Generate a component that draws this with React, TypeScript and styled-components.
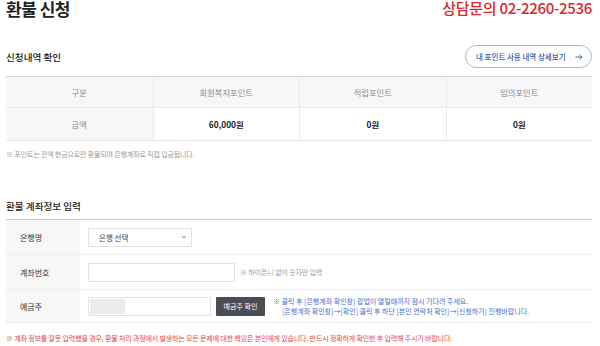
import React from "react";
import styled, { createGlobalStyle } from "styled-components";

const GlobalStyle = createGlobalStyle`
  html, body {
    margin: 0;
    padding: 0;
    background: #fff;
    font-family: "Noto Sans CJK KR", "Noto Sans", sans-serif;
    color: #222;
  }
`;

const Page = styled.div`
  width: 586px;
  margin: 0 8px 0 6px;
`;

const Header = styled.div`
  height: 18px;
  display: flex;
  align-items: flex-start;
  justify-content: space-between;
`;

const PageTitle = styled.h1`
  margin: 0;
  font-size: 17px;
  line-height: 17px;
  font-weight: 700;
  letter-spacing: -0.5px;
`;

const Contact = styled.div`
  font-size: 15px;
  line-height: 15px;
  font-weight: 500;
  color: #d9262b;
  letter-spacing: -0.3px;
`;

const SectionBar = styled.div<{ $top: number }>`
  margin-top: ${(p) => p.$top}px;
  height: 23px;
  display: flex;
  align-items: center;
  justify-content: space-between;
`;

const SectionTitle = styled.h2`
  margin: 0;
  font-size: 9.6px;
  font-weight: 500;
  color: #222;
`;

const PillButton = styled.button`
  width: 127px;
  height: 23px;
  padding: 0 8px 0 10px;
  display: flex;
  align-items: center;
  justify-content: space-between;
  border: 1px solid #a3b9df;
  border-radius: 12px;
  background: #fff;
  color: #2f5fae;
  font-family: inherit;
  font-size: 7.5px;
  font-weight: 500;
`;

const Table = styled.div`
  margin-top: 8px;
  border-top: 1px solid #d5d5d5;
  display: grid;
  grid-template-columns: repeat(4, 1fr);
`;

const Cell = styled.div<{ $head?: boolean; $strong?: boolean; $h: number }>`
  height: ${(p) => p.$h}px;
  display: flex;
  align-items: center;
  justify-content: center;
  background: ${(p) => (p.$head ? "#f7f7f7" : "#fff")};
  border-bottom: 1px solid #eaeaea;
  border-left: 1px solid #eaeaea;
  font-size: 8.3px;
  color: ${(p) => (p.$strong ? "#222" : "#8a8a8a")};
  font-weight: ${(p) => (p.$strong ? 700 : 400)};
  &:nth-child(4n + 1) {
    border-left: none;
  }
`;

const Note = styled.p<{ $color?: string; $top: number }>`
  margin: ${(p) => p.$top}px 0 0;
  font-size: 7px;
  line-height: 12px;
  color: ${(p) => p.$color || "#9a9a9a"};
  letter-spacing: -0.15px;
`;

const Form = styled.div`
  margin-top: 2px;
  border-top: 1px solid #c8c8c8;
`;

const Row = styled.div<{ $h: number }>`
  display: flex;
  height: ${(p) => p.$h}px;
  border-bottom: 1px solid #eeeeee;
`;

const Label = styled.div`
  width: 74px;
  flex-shrink: 0;
  background: #f7f7f7;
  display: flex;
  align-items: center;
  padding-left: 14px;
  box-sizing: border-box;
  font-size: 8px;
  color: #333;
`;

const Field = styled.div`
  flex: 1;
  display: flex;
  align-items: center;
  padding-left: 8px;
  gap: 5px;
`;

const Select = styled.div`
  width: 104px;
  height: 19px;
  box-sizing: border-box;
  border: 1px solid #e3e3e3;
  display: flex;
  align-items: center;
  justify-content: space-between;
  padding: 0 4px 0 10px;
  font-size: 7.5px;
  color: #444;
`;

const TextBox = styled.div<{ $w: number }>`
  width: ${(p) => p.$w}px;
  height: 19px;
  box-sizing: border-box;
  border: 1px solid #e3e3e3;
  background: #fff;
  display: flex;
  align-items: center;
  padding: 0 1px;
`;

const Masked = styled.span`
  width: 35px;
  height: 15px;
  background: #ececec;
`;

const Hint = styled.span`
  font-size: 7px;
  color: #9a9a9a;
  letter-spacing: -0.15px;
`;

const DarkButton = styled.button`
  width: 49px;
  height: 19px;
  border: none;
  border-radius: 1px;
  background: #4b4d55;
  color: #fff;
  font-family: inherit;
  font-size: 7px;
  padding: 0;
`;

const BlueNote = styled.div`
  margin-left: 3px;
  font-size: 7px;
  line-height: 10px;
  color: #3f6fd0;
  span {
    display: block;
    padding-left: 9px;
  }
`;

export default function App() {
  return (
    <Page>
      <GlobalStyle />
      <Header>
        <PageTitle>환불 신청</PageTitle>
        <Contact>상담문의 02-2260-2536</Contact>
      </Header>

      <SectionBar $top={27}>
        <SectionTitle>신청내역 확인</SectionTitle>
        <PillButton>
          내 포인트 사용 내역 상세보기
          <svg width="8" height="6" viewBox="0 0 8 6" fill="none" stroke="#2f5fae" strokeWidth="0.9">
            <path d="M0.5 3h6.5M4.5 0.7L7 3 4.5 5.3" />
          </svg>
        </PillButton>
      </SectionBar>

      <Table>
        <Cell $head $h={30}>구분</Cell>
        <Cell $head $h={30}>회원복지포인트</Cell>
        <Cell $head $h={30}>적립포인트</Cell>
        <Cell $head $h={30}>임의포인트</Cell>
        <Cell $head $h={32}>금액</Cell>
        <Cell $strong $h={32}>60,000원</Cell>
        <Cell $strong $h={32}>0원</Cell>
        <Cell $strong $h={32}>0원</Cell>
      </Table>
      <Note $top={7}>※ 포인트는 전액 현금으로만 환불되며 은행계좌로 직접 입금됩니다.</Note>

      <SectionBar $top={34}>
        <SectionTitle>환불 계좌정보 입력</SectionTitle>
      </SectionBar>

      <Form>
        <Row $h={34}>
          <Label>은행명</Label>
          <Field>
            <Select>
              은행 선택
              <svg width="6" height="4" viewBox="0 0 6 4" fill="none" stroke="#777" strokeWidth="0.9">
                <path d="M0.6 0.7L3 3.1 5.4 0.7" />
              </svg>
            </Select>
          </Field>
        </Row>
        <Row $h={34}>
          <Label>계좌번호</Label>
          <Field>
            <TextBox $w={147} />
            <Hint>※ 하이픈(-) 없이 숫자만 입력</Hint>
          </Field>
        </Row>
        <Row $h={32}>
          <Label>예금주</Label>
          <Field>
            <TextBox $w={123}>
              <Masked />
            </TextBox>
            <DarkButton>예금주 확인</DarkButton>
            <BlueNote>
              ※ 클릭 후 [은행계좌 확인창] 팝업이 열릴때까지 잠시 기다려 주세요.
              <span>[은행계좌 확인창]→[확인] 클릭 후 하단 [본인 연락처 확인]→[신청하기] 진행바랍니다.</span>
            </BlueNote>
          </Field>
        </Row>
      </Form>
      <Note $top={9} $color="#e64545">
        ※ 계좌 정보를 잘못 입력했을 경우, 환불 처리 과정에서 발생하는 모든 문제에 대한 책임은 본인에게 있습니다. 반드시 정확하게 확인한 후 입력해 주시기 바랍니다.
      </Note>
    </Page>
  );
}
